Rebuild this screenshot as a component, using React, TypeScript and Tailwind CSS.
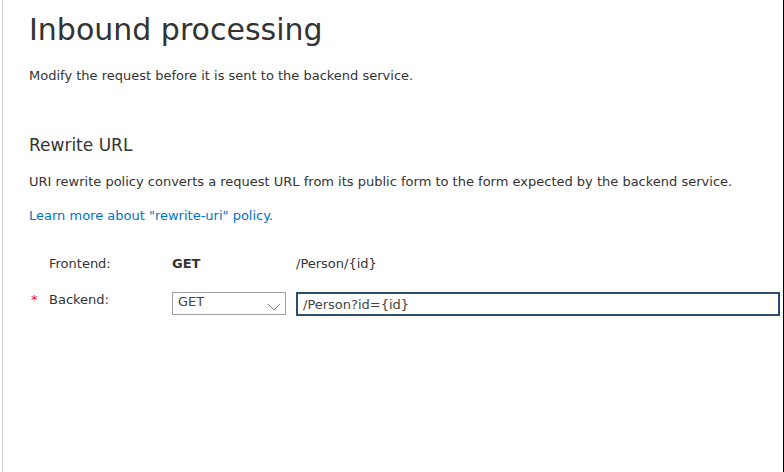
import React from "react";

export default function App() {
  return (
    <div className="w-[784px] h-[472px] bg-white flex" style={{ fontFamily: '"DejaVu Sans", sans-serif' }}>
      <div className="w-[2px] bg-white" />
      <div className="flex-1 h-full border-l border-[#d4d4d4] border-r border-r-black pl-[26px] pr-[3px] text-[#333333]">
        <h1 className="text-[30px] leading-[36px] mt-[12px] text-[#333333]">Inbound processing</h1>
        <p className="text-[13px] leading-[18px] mt-[19px]">Modify the request before it is sent to the backend service.</p>
        <h2 className="text-[17px] leading-[24px] mt-[48px]">Rewrite URL</h2>
        <p className="text-[13px] leading-[18px] mt-[16px]">URI rewrite policy converts a request URL from its public form to the form expected by the backend service.</p>
        <a className="block text-[13px] leading-[18px] mt-[16px] text-[#0072c6]">Learn more about "rewrite-uri" policy.</a>
        <div className="mt-[30px] flex flex-col gap-[19px]">
          <div className="flex items-center h-[18px] text-[13px]">
            <div className="w-[143px] pl-[20px]">Frontend:</div>
            <div className="w-[124px] font-bold">GET</div>
            <div>/Person/{"{id}"}</div>
          </div>
          <div className="flex items-start text-[13px]">
            <div className="w-[143px] flex items-center h-[18px] mt-[-1px]">
              <span className="w-[20px] text-[#e81123] pl-[2px]">*</span>
              <span>Backend:</span>
            </div>
            <div className="w-[114px] h-[23px] border border-[#a0a0a0] flex items-center justify-between pl-[5px] pr-[4px] mr-[10px] text-[#444444]">
              <span className="leading-[16px] mt-[-3px]">GET</span>
              <svg width="14" height="9" viewBox="0 0 14 9" className="mt-[8px]">
                <path d="M1 1 L7 7 L13 1" fill="none" stroke="#888" strokeWidth="1" />
              </svg>
            </div>
            <div className="flex-1 h-[24px] border-2 border-[#2e4d6e] flex items-center pl-[5px] text-[#444444]">
              <span className="mt-[1px]">/Person?id={"{id}"}</span>
            </div>
          </div>
        </div>
      </div>
    </div>
  );
}
